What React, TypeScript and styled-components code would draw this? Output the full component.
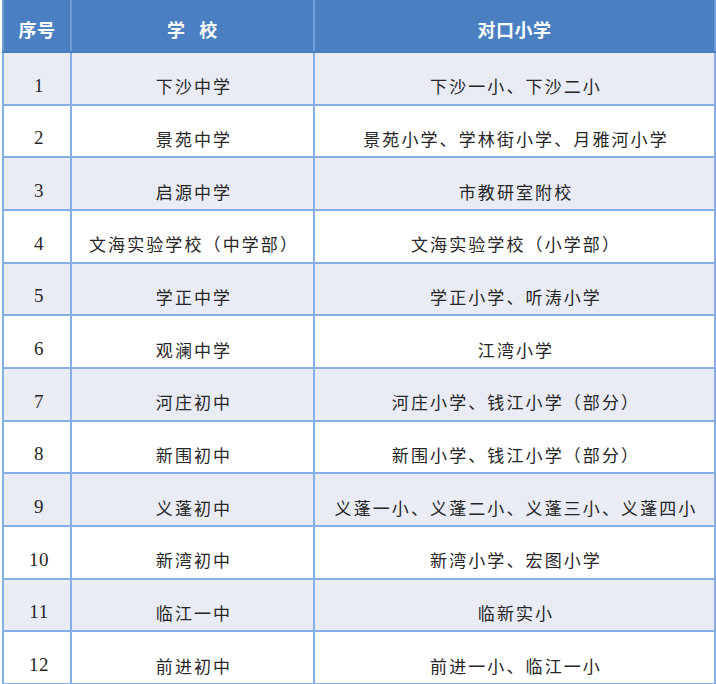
import React from "react";
import styled, { createGlobalStyle } from "styled-components";

const Global = createGlobalStyle`
  html, body { margin: 0; padding: 0; background: #fff; }
  body { font-family: "Noto Sans CJK SC", "Noto Sans", sans-serif; }
`;

const Page = styled.div`
  padding: 0 2px 0 2px;
  width: 716px;
  box-sizing: border-box;
`;

const Table = styled.table`
  width: 712px;
  border-collapse: collapse;
  table-layout: fixed;
`;

const HeadCell = styled.th<{ $w: number }>`
  width: ${(p) => p.$w}px;
  height: 52px;
  background: #4a80c2;
  color: #fff;
  font-family: "Noto Sans CJK SC", sans-serif;
  font-weight: 700;
  font-size: 18px;
  letter-spacing: 0.5px;
  padding: 6px 0 0 0;
  border-left: 2px solid #6f9bd6;
  border-right: 2px solid #6f9bd6;
  border-bottom: 2px solid #4a80c2;
  box-sizing: border-box;
  text-align: center;
  white-space: pre;
`;

const Row = styled.tr<{ $band: boolean }>`
  height: 52.67px;
  background: ${(p) => (p.$band ? "#e9ecf5" : "#ffffff")};
`;

const Cell = styled.td<{ $num?: boolean }>`
  border: 2px solid #86afe6;
  text-align: center;
  vertical-align: middle;
  padding: 15px 0 0 ${(p) => (p.$num ? "4px" : "3px")};
  color: #262626;
  font-family: ${(p) =>
    p.$num
      ? '"Liberation Serif", "Times New Roman", serif'
      : '"Noto Sans CJK SC", sans-serif'};
  font-size: ${(p) => (p.$num ? "19px" : "17px")};
  font-weight: 400;
  letter-spacing: ${(p) => (p.$num ? "0.5px" : "2.1px")};
  white-space: nowrap;
  box-sizing: border-box;
`;

const rows: [string, string][] = [
  ["下沙中学", "下沙一小、下沙二小"],
  ["景苑中学", "景苑小学、学林街小学、月雅河小学"],
  ["启源中学", "市教研室附校"],
  ["文海实验学校（中学部）", "文海实验学校（小学部）"],
  ["学正中学", "学正小学、听涛小学"],
  ["观澜中学", "江湾小学"],
  ["河庄初中", "河庄小学、钱江小学（部分）"],
  ["新围初中", "新围小学、钱江小学（部分）"],
  ["义蓬初中", "义蓬一小、义蓬二小、义蓬三小、义蓬四小"],
  ["新湾初中", "新湾小学、宏图小学"],
  ["临江一中", "临新实小"],
  ["前进初中", "前进一小、临江一小"],
];

export default function App() {
  return (
    <>
      <Global />
      <Page>
        <Table>
          <thead>
            <tr>
              <HeadCell $w={68}>序号</HeadCell>
              <HeadCell $w={243}>{"学   校"}</HeadCell>
              <HeadCell $w={401}>对口小学</HeadCell>
            </tr>
          </thead>
          <tbody>
            {rows.map(([school, primary], i) => (
              <Row key={i} $band={i % 2 === 0}>
                <Cell $num>{i + 1}</Cell>
                <Cell>{school}</Cell>
                <Cell>{primary}</Cell>
              </Row>
            ))}
          </tbody>
        </Table>
      </Page>
    </>
  );
}
